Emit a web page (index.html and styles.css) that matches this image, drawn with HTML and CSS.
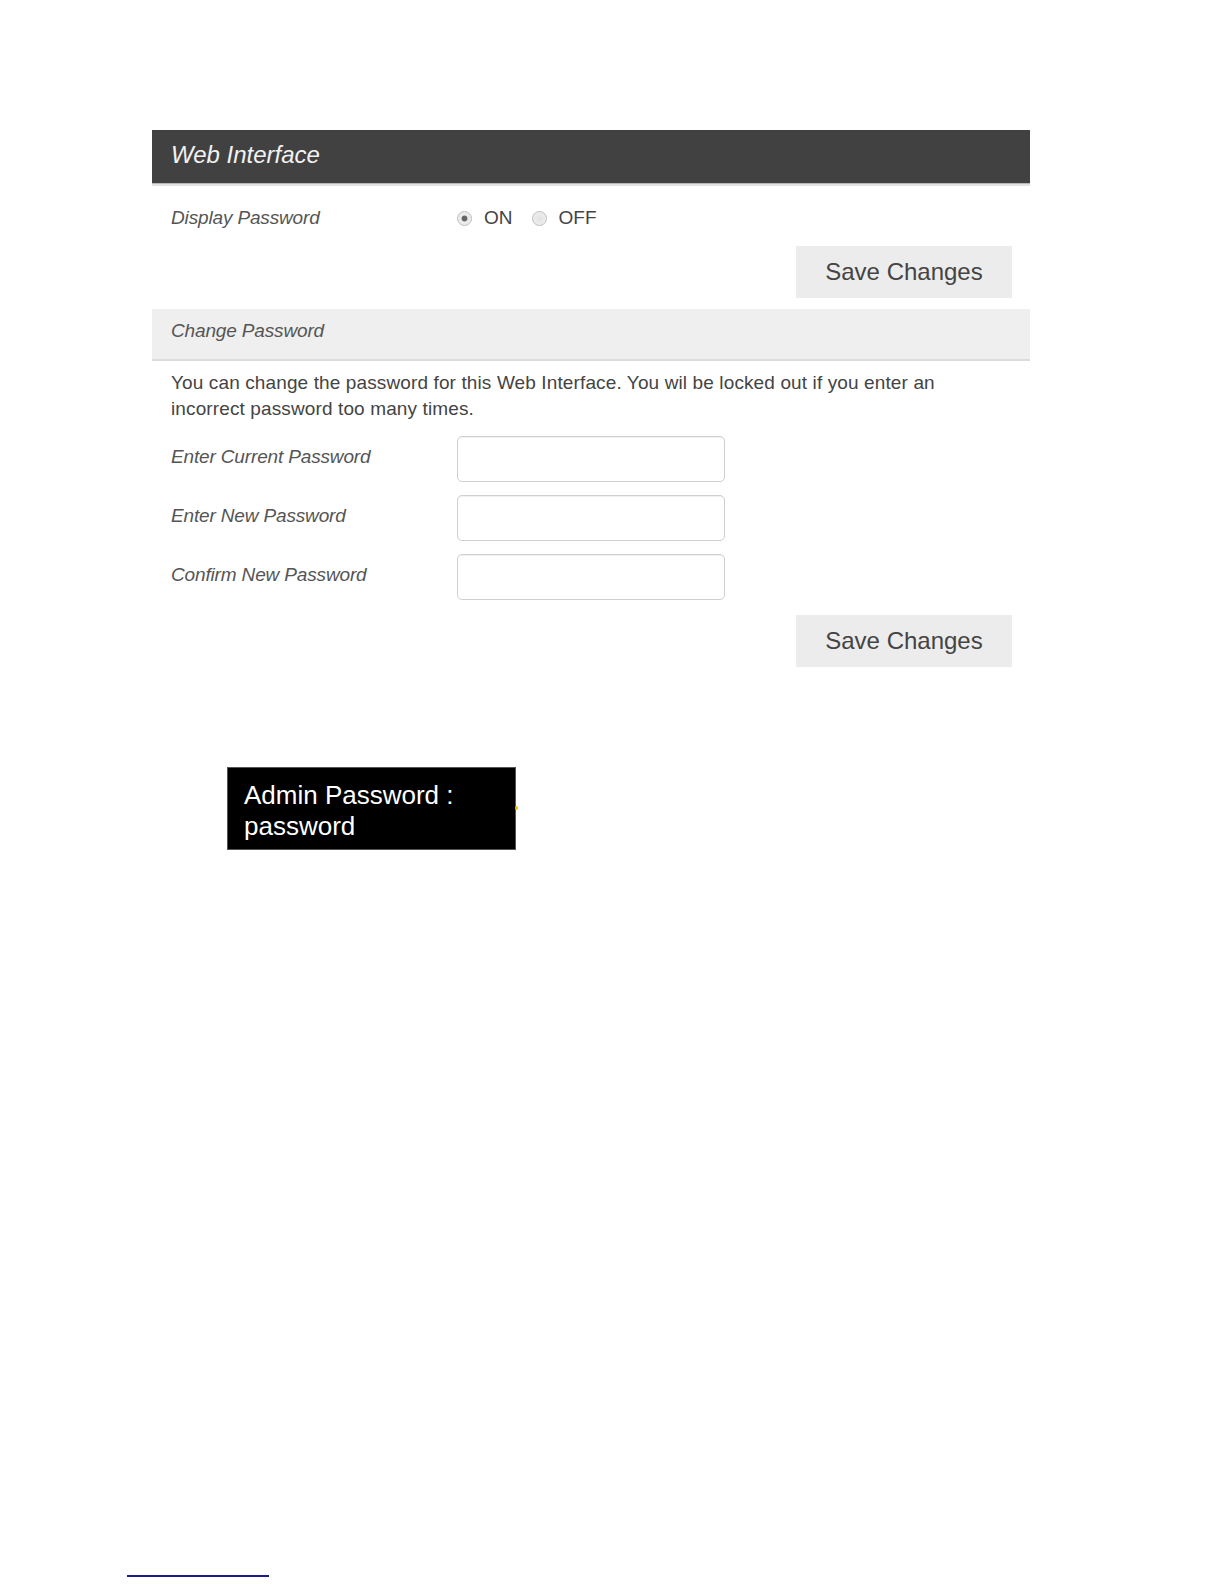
FILE: index.html
```html
<!DOCTYPE html>
<html lang="en">
<head>
    <meta charset="UTF-8">
    <meta name="viewport" content="width=device-width, initial-scale=1.0">
    <title>Web Interface</title>
    <link rel="stylesheet" href="styles.css">
</head>
<body>
    <div class="page">
        <div class="panel">
            <div class="panel-head">Web Interface</div>

            <div class="field-row display-row">
                <span class="label">Display Password</span>
                <div class="choices">
                    <label class="choice"><input type="radio" name="display" checked> ON</label>
                    <label class="choice"><input type="radio" name="display"> OFF</label>
                </div>
            </div>
            <div class="actions">
                <button class="save">Save Changes</button>
            </div>

            <div class="section-head">Change Password</div>
            <p class="intro">You can change the password for this Web Interface. You wil be locked out if you enter an incorrect password too many times.</p>

            <div class="form">
                <div class="field-row">
                    <label class="label" for="current">Enter Current Password</label>
                    <input type="password" id="current" class="text-input">
                </div>
                <div class="field-row">
                    <label class="label" for="newPass">Enter New Password</label>
                    <input type="password" id="newPass" class="text-input">
                </div>
                <div class="field-row">
                    <label class="label" for="confirm">Confirm New Password</label>
                    <input type="password" id="confirm" class="text-input">
                </div>
            </div>
            <div class="actions second">
                <button class="save">Save Changes</button>
            </div>
        </div>

        <div class="note">
            Admin Password :<br>password
            <span class="dot"></span>
        </div>

        <div class="footline"></div>
    </div>
</body>
</html>
```

FILE: styles.css
```css
/* Base */
body {
    margin: 0;
    font-family: 'Liberation Sans', Arial, sans-serif;
    background: #fff;
    color: #444;
}

.page {
    padding-top: 130px;
}

/* Panel */
.panel {
    margin-left: 152px;
    width: 878px;
}

.panel-head {
    height: 53px;
    line-height: 50px;
    padding-left: 19px;
    background: #414141;
    color: #f2f2f2;
    font-size: 24px;
    font-style: italic;
    box-shadow: 0 1px 0 #b8b8b8, 0 3px 0 #e2e2e2;
}

.field-row {
    display: flex;
    align-items: center;
    padding-left: 19px;
}

.label {
    width: 286px;
    flex-shrink: 0;
    font-size: 19px;
    font-style: italic;
    letter-spacing: -0.15px;
    color: #555;
}

.form .label {
    padding-bottom: 5px;
}

.display-row {
    padding-top: 23px;
    line-height: 24px;
}

.choices {
    display: flex;
    align-items: center;
    font-size: 19px;
    color: #444;
}

.choice {
    display: flex;
    align-items: center;
    margin-right: 19px;
}

.choice input {
    appearance: none;
    -webkit-appearance: none;
    width: 15px;
    height: 15px;
    margin: 0 12px 0 0;
    border: 1px solid #bdbdbd;
    border-radius: 50%;
    background: radial-gradient(circle, #e2e2e2 0%, #f2f2f2 100%);
    box-sizing: border-box;
}

.choice input:checked {
    background: radial-gradient(circle, #666 0, #666 2.6px, #e8e8e8 3.3px, #f2f2f2 100%);
}

/* Buttons */
.actions {
    display: flex;
    justify-content: flex-end;
    padding-right: 18px;
    margin-top: 16px;
}

.actions.second {
    margin-top: 15px;
}

.save {
    width: 216px;
    height: 52px;
    border: none;
    background: #ececec;
    color: #444;
    font-family: 'Liberation Sans', Arial, sans-serif;
    font-size: 24px;
    padding: 0;
    cursor: pointer;
}

/* Change password */
.section-head {
    margin-top: 11px;
    height: 50px;
    line-height: 44px;
    padding-left: 19px;
    background: #efefef;
    border-bottom: 2px solid #dcdcdc;
    font-size: 19px;
    font-style: italic;
    letter-spacing: -0.15px;
    color: #555;
}

.intro {
    margin: 9px 0 0;
    padding: 0 60px 0 19px;
    font-size: 19px;
    line-height: 26px;
    letter-spacing: 0.12px;
    color: #444;
}

.form {
    display: flex;
    flex-direction: column;
    gap: 13px;
    margin-top: 14px;
}

.text-input {
    width: 268px;
    height: 46px;
    box-sizing: border-box;
    border: 1px solid #cfcfcf;
    border-radius: 5px;
    box-shadow: inset 0 1px 1px rgba(0, 0, 0, 0.06);
    background: #fff;
    margin: 0;
}

/* Admin note */
.note {
    position: relative;
    margin: 100px 0 0 227px;
    width: 289px;
    height: 83px;
    box-sizing: border-box;
    padding: 12px 0 0 16px;
    background: #000;
    border: 1px solid #555;
    color: #fff;
    font-size: 26px;
    line-height: 31px;
}

.dot {
    position: absolute;
    right: -3px;
    top: 38px;
    width: 3px;
    height: 4px;
    border-radius: 50%;
    background: #e8c200;
}

.footline {
    margin: 725px 0 0 127px;
    width: 142px;
    height: 2px;
    background: #1c1c8c;
}
```
